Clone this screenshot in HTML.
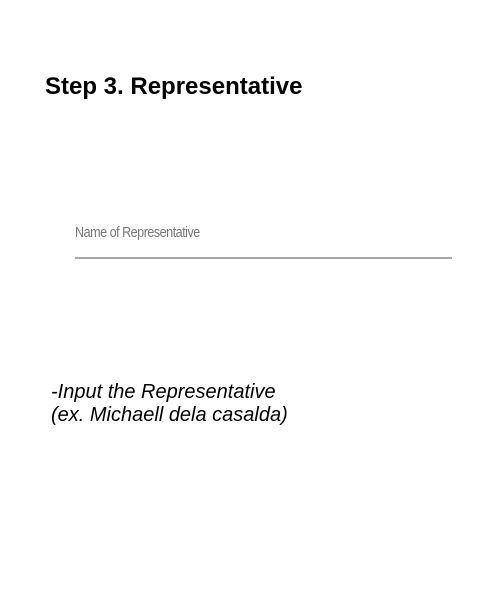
<!DOCTYPE html>
<html><head><style>
html,body{margin:0;padding:0;background:#fff;width:500px;height:600px;overflow:hidden;position:relative;font-family:"Liberation Sans",sans-serif}
.h{position:absolute;left:45px;top:73px;font-size:24px;font-weight:bold;color:#000}
.lbl{position:absolute;left:75px;top:224px;font-size:15px;color:#777;letter-spacing:-0.6px;transform:scaleX(0.84);transform-origin:left}
.line{position:absolute;left:75px;top:257px;width:377px;height:2px;background:#a8a8a8}
.note{position:absolute;left:51px;top:381px;font-size:20px;font-style:italic;color:#000;line-height:23px}
</style></head><body>
<div class="h">Step 3. Representative</div>
<div class="lbl">Name of Representative</div>
<div class="line"></div>
<div class="note">-Input the Representative<br>(ex. Michaell dela casalda)</div>
</body></html>
